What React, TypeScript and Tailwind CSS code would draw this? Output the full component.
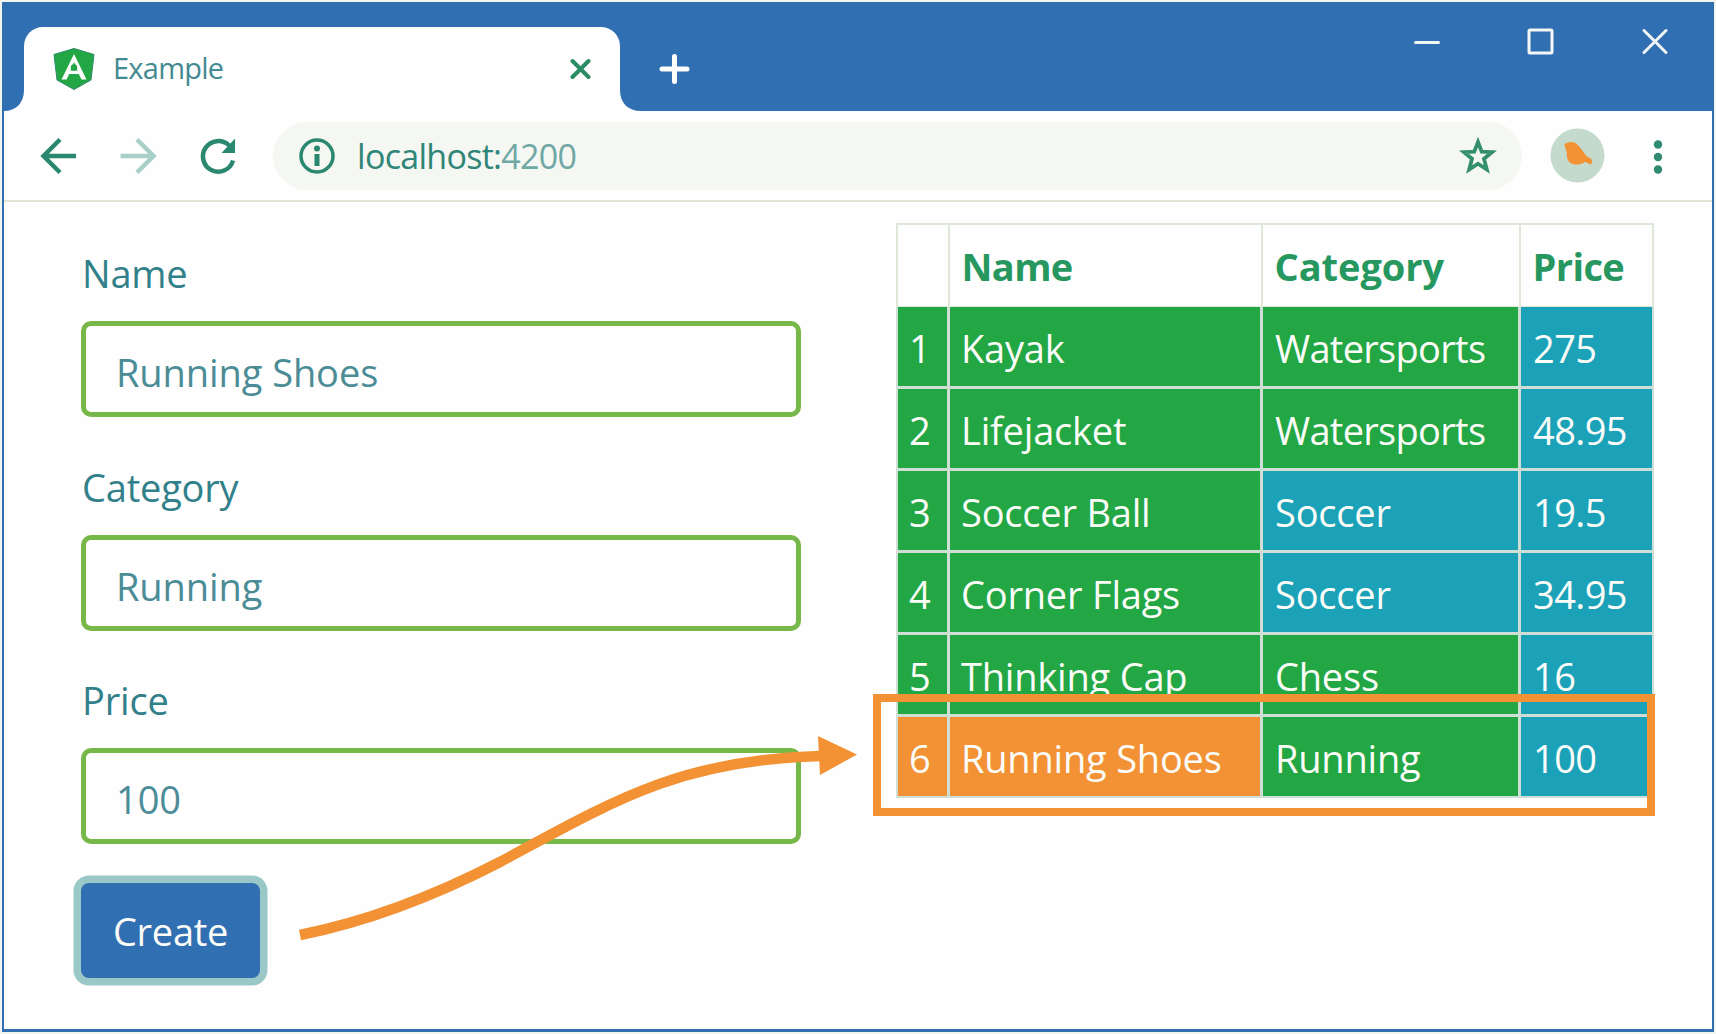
import { ReactNode } from "react";

type Tone = "green" | "teal" | "orange";

const toneClass: Record<Tone, string> = {
  green: "bg-[#22a744]",
  teal: "bg-[#1ca2b8]",
  orange: "bg-[#f29234]",
};

type Product = {
  id: number;
  name: string;
  category: string;
  price: string;
  tones: [Tone, Tone, Tone];
};

const products: Product[] = [
  { id: 1, name: "Kayak", category: "Watersports", price: "275", tones: ["green", "green", "teal"] },
  { id: 2, name: "Lifejacket", category: "Watersports", price: "48.95", tones: ["green", "green", "teal"] },
  { id: 3, name: "Soccer Ball", category: "Soccer", price: "19.5", tones: ["green", "teal", "teal"] },
  { id: 4, name: "Corner Flags", category: "Soccer", price: "34.95", tones: ["green", "teal", "teal"] },
  { id: 5, name: "Thinking Cap", category: "Chess", price: "16", tones: ["green", "green", "teal"] },
  { id: 6, name: "Running Shoes", category: "Running", price: "100", tones: ["orange", "green", "teal"] },
];

function AngularLogo() {
  return (
    <svg className="h-[42px] w-[42px] shrink-0" viewBox="0 0 42 42">
      <path d="M21 0.5 L41 6.5 L38 32 L21 41.5 L4 32 L1 6.5 Z" fill="#22a744" stroke="#2f8a6c" strokeWidth="1" />
      <path
        d="M21 6 L33.500 31.500 H28.500 L25.800 26 H16.200 L13.500 31.500 H8.500 Z M21 14 L17.300 22.500 H24.700 Z"
        fill="#fefefe"
        fillRule="evenodd"
      />
      <circle cx="21" cy="19.500" r="3.200" fill="#22a744" />
    </svg>
  );
}

function TitleBar() {
  return (
    <header className="flex h-[109px] items-end bg-[#316fb3]">
      <svg className="h-[21px] w-[22px] shrink-0" viewBox="0 0 22 21">
        <path d="M22 0 V21 H2 C14 21 22 13 22 0 Z" fill="#fefefe" />
      </svg>
      <div className="flex h-[84px] w-[596px] items-center rounded-t-[19px] bg-[#fefefe] pl-[29px] pr-[28px]">
        <AngularLogo />
        <span className="-mt-[2px] ml-[18px] flex-1 text-[29px] leading-10 tracking-[-0.750px] text-[#438a92]">Example</span>
        <svg className="h-[22px] w-[22px]" viewBox="0 0 22 22" stroke="#2a8c63" strokeWidth="4" strokeLinecap="round">
          <path d="M2.500 3 L18.500 19 M18.500 3 L2.500 19" />
        </svg>
      </div>
      <svg className="h-[21px] w-[21px] shrink-0" viewBox="0 0 21 21">
        <path d="M0 0 V21 H21 C8 21 0 13 0 0 Z" fill="#fefefe" />
      </svg>
      <div className="flex flex-1 justify-between self-start">
        <svg className="ml-[17px] mt-[51px] h-[32px] w-[32px]" viewBox="0 0 32 32" stroke="#fefefe" strokeWidth="5" strokeLinecap="round">
          <path d="M16.500 3.500 V28.500 M4 16 H29" />
        </svg>
        <div className="mr-[44px] mt-[24px] flex gap-[84px] text-[#f3f7f5]">
          <svg className="h-[30px] w-[30px]" viewBox="0 0 30 30" stroke="currentColor" strokeWidth="3" strokeLinecap="round">
            <path d="M3.500 16.500 H26.500" />
          </svg>
          <svg className="h-[30px] w-[30px]" viewBox="0 0 30 30" fill="none" stroke="currentColor" strokeWidth="3">
            <rect x="3" y="4" width="23" height="23" rx="1" />
          </svg>
          <svg className="h-[30px] w-[30px]" viewBox="0 0 30 30" stroke="currentColor" strokeWidth="3" strokeLinecap="round">
            <path d="M4 4.500 L26 26.500 M26 4.500 L4 26.500" />
          </svg>
        </div>
      </div>
    </header>
  );
}

function Toolbar() {
  return (
    <nav className="flex h-[91px] items-center border-b-2 border-[#dfe6d6] pl-[35px]">
      <svg className="h-[40px] w-[40px]" viewBox="0 0 40 40" fill="none" stroke="#2b8870" strokeWidth="4.500">
        <path d="M37 20 H5 M21 3.500 L4.500 20 L21 36.500" />
      </svg>
      <svg className="ml-[40px] h-[40px] w-[40px]" viewBox="0 0 40 40" fill="none" stroke="#a9d0c8" strokeWidth="4.500">
        <path d="M1.500 20 H34 M18 3.500 L34.500 20 L18 36.500" />
      </svg>
      <svg className="ml-[39px] h-[40px] w-[40px]" viewBox="0 0 40 40" fill="none" stroke="#2b8870" strokeWidth="4.500">
        <path d="M35 24.500 A15.300 15.300 0 1 1 31 9.500" />
        <path d="M37 2.500 V17 H23.500 Z" fill="#2b8870" stroke="none" />
      </svg>
      <div className="ml-[35px] flex h-[68px] w-[1249px] items-center rounded-full bg-[#f5f7f2] pl-[25px] pr-[24px]">
        <svg className="h-[38px] w-[38px]" viewBox="0 0 38 38" fill="none" stroke="#2b8870" strokeWidth="3.500">
          <circle cx="19" cy="19" r="16" />
          <path d="M19 17 V29" strokeWidth="5" />
          <circle cx="19" cy="11.500" r="3" fill="#2b8870" stroke="none" />
        </svg>
        <span className="ml-[21px] flex-1 text-[34px] leading-10 tracking-[-0.700px] text-[#2f8577]">
          localhost:<span className="text-[#6fa8a4]">4200</span>
        </span>
        <svg className="h-[40px] w-[40px]" viewBox="0 0 40 40" fill="none" stroke="#338f6c" strokeWidth="3.800">
          <path d="M20 6 L23.700 15.700 L34 16.100 L26 22.800 L28.800 33.500 L20 27.700 L11.200 33.500 L14 22.800 L6 16.100 L16.300 15.700 Z" />
        </svg>
      </div>
      <svg className="ml-[28px] h-[55px] w-[55px]" viewBox="0 0 55 55">
        <circle cx="27.500" cy="27.500" r="27" fill="#c3dacd" />
        <path
          d="M14.300 16.700 C17 13.500 23 13 26.700 16 C30.500 19 32.500 23 36 27.500 L42.500 32 L41 36.700 L35 33.700 C33 36 27 37 23.300 36.300 C18 34.500 16.700 31 16.700 23.700 Z"
          fill="#f29234"
        />
      </svg>
      <svg className="ml-[43px] h-[40px] w-[20px]" viewBox="0 0 20 40" fill="#2f8b72">
        <circle cx="10" cy="8.500" r="4.200" />
        <circle cx="10" cy="21" r="4.200" />
        <circle cx="10" cy="33.500" r="4.200" />
      </svg>
    </nav>
  );
}

function Field({ label, value }: { label: string; value: string }) {
  return (
    <div className="mb-[34px] h-[179.600px]">
      <div className="ml-[1px] h-[84px] pt-[10px] text-[38px] leading-[52px] tracking-[-0.200px] text-[#31808a]">{label}</div>
      <div className="flex h-[96px] w-[720px] items-center rounded-[10px] border-[5.500px] border-[#78b84a] pl-[30px] pt-[6px] text-[38px] leading-[52px] tracking-[-0.080px] text-[#4b8c96]">
        {value}
      </div>
    </div>
  );
}

function Cell({ tone, className, children }: { tone: Tone; className: string; children: ReactNode }) {
  return <div className={`flex items-center pt-[2px] ${className} ${toneClass[tone]}`}>{children}</div>;
}

function HeaderCell({ children }: { children?: ReactNode }) {
  return <div className="flex h-[81px] items-center bg-[#fefefe] pl-[12px] pt-px">{children}</div>;
}

function ProductTable() {
  return (
    <div className="w-[758px] text-[38px] leading-[52px] text-[#fbfcf8]">
      <div className="grid grid-cols-[50px_311px_256px_131px] gap-[2px] bg-[#dfe7d9] p-[1.500px] font-bold tracking-[-0.600px] text-[#26985f]">
        <HeaderCell />
        <HeaderCell>Name</HeaderCell>
        <HeaderCell>
          <span className="tracking-[-0.050px]">Category</span>
        </HeaderCell>
        <HeaderCell>Price</HeaderCell>
      </div>
      <div className="grid auto-rows-[79px] grid-cols-[49px_310px_255px_131px] gap-[3px] bg-[#cfdfd6] px-[2px] pb-[2px]">
        {products.map((p) => (
          <div key={p.id} className="contents">
            <Cell tone={p.tones[0]} className="pl-[11px]">{p.id}</Cell>
            <Cell tone={p.tones[0]} className="pl-[11px] tracking-[-0.200px]">{p.name}</Cell>
            <Cell
              tone={p.tones[1]}
              className={p.category === "Watersports" ? "pl-[12px] tracking-[-0.700px]" : "pl-[12px] tracking-[-0.200px]"}
            >
              {p.category}
            </Cell>
            <Cell tone={p.tones[2]} className="pl-[12px] tracking-[-0.600px]">{p.price}</Cell>
          </div>
        ))}
      </div>
    </div>
  );
}

export default function App() {
  return (
    <div className="relative h-[1034px] w-[1716px] overflow-hidden bg-[#f2f4ee] p-[2px] font-['Open_Sans','Noto_Sans',sans-serif]">
      <div className="h-[1030px] w-[1712px] bg-[#316fb3]">
        <TitleBar />
        <div className="mx-[2px] h-[918px] bg-[#fefefe]">
          <Toolbar />
          <main className="flex">
            <form className="ml-[77px] w-[815px] pt-[35px]">
              <Field label="Name" value="Running Shoes" />
              <Field label="Category" value="Running" />
              <Field label="Price" value="100" />
              <button
                type="button"
                className="mt-[39px] flex h-[95px] w-[179px] items-center justify-center rounded-[8px] bg-[#316fb3] pt-[2px] text-[38px] leading-[52px] tracking-[-0.300px] text-[#fbfcf8] ring-[7.500px] ring-[#9ac8c6]"
              >
                Create
              </button>
            </form>
            <div className="pt-[21px]">
              <ProductTable />
            </div>
          </main>
        </div>
      </div>
      <div className="absolute left-[873px] top-[694px] h-[122px] w-[782px] border-8 border-[#f29234]" />
      <svg className="absolute left-[290px] top-[726px] h-[230px] w-[580px]" viewBox="290 726 580 230">
        <path d="M300 935 C375 920 440 893 500 862 C615 800 680 760 820 756" fill="none" stroke="#f29234" strokeWidth="10.500" />
        <path d="M818 736 L857 754.500 L820 775 Z" fill="#f29234" />
      </svg>
    </div>
  );
}
